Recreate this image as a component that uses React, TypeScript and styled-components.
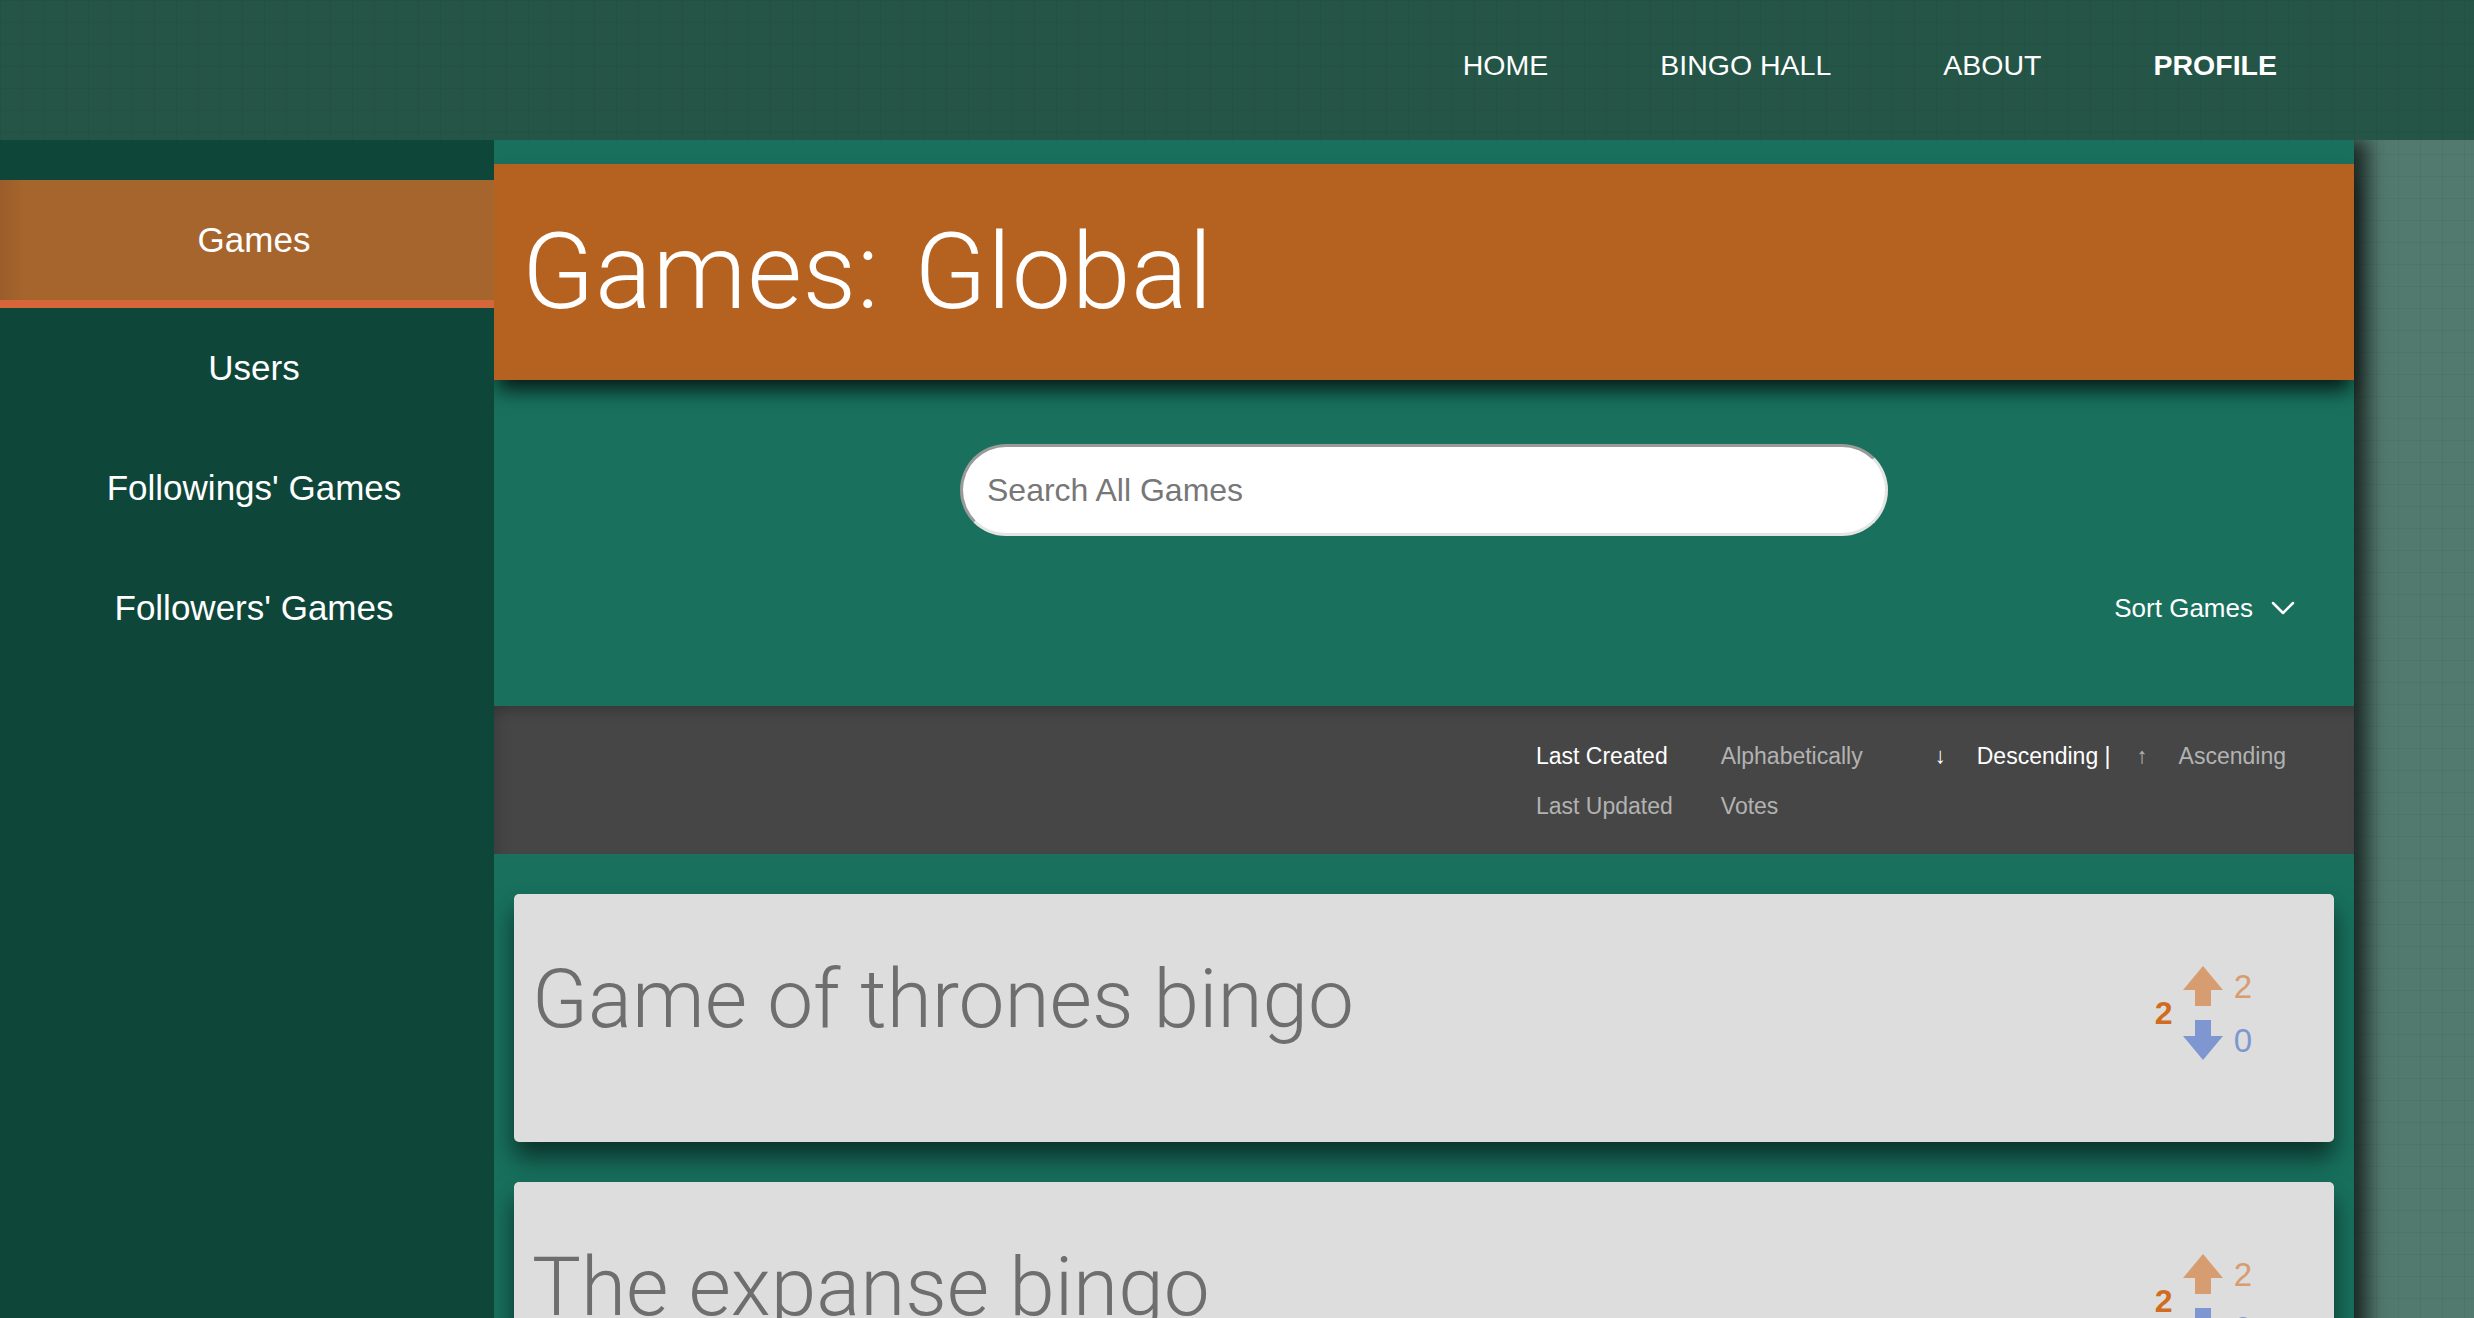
import React from "react";
import styled, { createGlobalStyle } from "styled-components";
import { ChevronDown } from "lucide-react";

const GlobalStyle = createGlobalStyle`
  * { box-sizing: border-box; }
  html, body { margin: 0; padding: 0; overflow: hidden; }
  body {
    font-family: "Liberation Sans", Arial, Helvetica, sans-serif;
    background-color: #537a6f;
    background-image:
      linear-gradient(rgba(0, 0, 0, 0.045) 1px, transparent 1px),
      linear-gradient(90deg, rgba(0, 0, 0, 0.045) 1px, transparent 1px);
    background-size: 22px 22px;
  }
`;

const Header = styled.header`
  position: relative;
  z-index: 3;
  height: 140px;
  display: flex;
  justify-content: flex-end;
  align-items: center;
  padding: 0 197px 10px 0;
  background-color: #245546;
  background-image:
    linear-gradient(rgba(0, 0, 0, 0.03) 1px, transparent 1px),
    linear-gradient(90deg, rgba(0, 0, 0, 0.03) 1px, transparent 1px);
  background-size: 22px 22px;
`;

const Nav = styled.nav`
  display: flex;
  gap: 112px;
`;

const NavLink = styled.a<{ $active?: boolean }>`
  color: #fff;
  font-size: 28.5px;
  line-height: 1;
  font-weight: ${(p) => (p.$active ? 700 : 400)};
  text-decoration: none;
  text-transform: uppercase;
  cursor: pointer;
`;

const Body = styled.div`
  display: flex;
  align-items: stretch;
  min-height: calc(100vh - 140px);
`;

const Sidebar = styled.aside`
  position: relative;
  z-index: 2;
  width: 494px;
  flex-shrink: 0;
  padding-top: 40px;
  background: #0e4639;
  display: flex;
  flex-direction: column;
`;

const SideItem = styled.a<{ $active?: boolean }>`
  display: flex;
  align-items: center;
  justify-content: center;
  height: ${(p) => (p.$active ? 128 : 120)}px;
  padding-left: 14px;
  color: #fff;
  font-size: 35px;
  text-decoration: none;
  cursor: pointer;
  background: ${(p) =>
    p.$active ? "linear-gradient(90deg, #9b5d2b 0px, #a6652c 26px)" : "transparent"};
  border-bottom: ${(p) => (p.$active ? "8px solid #d4663a" : "none")};
`;

const Main = styled.main`
  position: relative;
  z-index: 1;
  width: 1860px;
  flex-shrink: 0;
  background: #18705d;
  box-shadow: 14px 0 18px rgba(0, 0, 0, 0.65);
  display: flex;
  flex-direction: column;
`;

const Banner = styled.div`
  position: relative;
  z-index: 1;
  margin-top: 24px;
  height: 216px;
  display: flex;
  align-items: center;
  padding-left: 28px;
  background: #b5611f;
  box-shadow: 0 14px 18px -4px rgba(0, 0, 0, 0.75);
`;

const BannerTitle = styled.h1`
  margin: 0;
  font-family: Roboto, "Liberation Sans", Arial, sans-serif;
  font-weight: 300;
  font-size: 106px;
  line-height: 1.1;
  color: #fff;
  letter-spacing: 0.6px;
  word-spacing: 8px;
`;

const SearchRow = styled.div`
  display: flex;
  justify-content: center;
  padding-top: 64px;
`;

const SearchInput = styled.input`
  width: 928px;
  height: 92px;
  border-radius: 46px;
  border: 3px solid;
  border-color: #9a9a9a #e4e4e4 #e4e4e4 #9a9a9a;
  background: #fff;
  padding: 0 24px;
  font-family: "Liberation Sans", Arial, sans-serif;
  font-size: 32px;
  color: #555;
  outline: none;
  &::placeholder {
    color: #777;
  }
`;

const SortToggleRow = styled.div`
  display: flex;
  justify-content: flex-end;
  align-items: center;
  height: 44px;
  margin-top: 50px;
  padding-right: 51px;
`;

const SortToggle = styled.button`
  display: flex;
  align-items: center;
  gap: 10px;
  padding: 0;
  border: none;
  background: none;
  color: #fff;
  font-family: "Liberation Sans", Arial, sans-serif;
  font-size: 26px;
  cursor: pointer;
`;

const SortBar = styled.div`
  margin-top: 76px;
  height: 148px;
  display: flex;
  justify-content: flex-end;
  align-items: flex-start;
  gap: 72px;
  padding: 35px 68px 0 0;
  background: #464646;
  box-shadow: inset 0 14px 14px -10px rgba(0, 0, 0, 0.22),
    inset 14px 0 14px -10px rgba(0, 0, 0, 0.12);
`;

const SortGrid = styled.div`
  display: grid;
  grid-template-columns: auto auto;
  column-gap: 48px;
  row-gap: 20px;
`;

const SortOption = styled.span<{ $active?: boolean }>`
  font-size: 23px;
  line-height: 30px;
  color: ${(p) => (p.$active ? "#ffffff" : "#b2b2b2")};
  cursor: pointer;
`;

const OrderGroup = styled.div`
  display: flex;
  align-items: center;
  height: 30px;
`;

const OrderArrow = styled.span<{ $active?: boolean }>`
  font-size: 22px;
  line-height: 30px;
  margin-right: 31px;
  color: ${(p) => (p.$active ? "#ffffff" : "#b2b2b2")};
`;

const OrderLabel = styled(SortOption)<{ $gap?: number }>`
  margin-right: ${(p) => p.$gap ?? 0}px;
`;

const CardList = styled.div`
  display: flex;
  flex-direction: column;
  gap: 40px;
  padding: 40px 20px;
`;

const Card = styled.article`
  display: flex;
  justify-content: space-between;
  align-items: flex-start;
  height: 248px;
  padding: 56px 82px 0 18px;
  border-radius: 5px;
  background: #dddddd;
  box-shadow: 0 16px 24px rgba(0, 0, 0, 0.55);
`;

const CardTitle = styled.h2`
  margin: 0;
  font-family: Roboto, "Liberation Sans", Arial, sans-serif;
  font-weight: 300;
  font-size: 82px;
  line-height: 1.2;
  color: #6e6e6e;
`;

const Votes = styled.div`
  margin-top: 16px;
  display: grid;
  grid-template-columns: auto 40px auto;
  grid-template-rows: 40px 40px;
  column-gap: 10px;
  row-gap: 14px;
`;

const Total = styled.span`
  grid-row: 1 / span 2;
  grid-column: 1;
  align-self: center;
  font-size: 32px;
  font-weight: 700;
  color: #d16b20;
  line-height: 1;
`;

const Count = styled.span<{ $color: string }>`
  align-self: center;
  font-size: 33px;
  line-height: 1;
  color: ${(p) => p.$color};
  padding-left: 1px;
`;

const UP = "#d79c6f";
const DOWN = "#7f97d0";

const ArrowUp = () => (
  <svg width="40" height="40" viewBox="0 0 40 40">
    <path d="M20 0 L40 24 L28 24 L28 40 L12 40 L12 24 L0 24 Z" fill={UP} />
  </svg>
);

const ArrowDown = () => (
  <svg width="40" height="40" viewBox="0 0 40 40">
    <path d="M12 0 L28 0 L28 16 L40 16 L20 40 L0 16 L12 16 Z" fill={DOWN} />
  </svg>
);

const games = [
  { title: "Game of thrones bingo", up: 2, down: 0 },
  { title: "The expanse bingo", up: 2, down: 0 },
  { title: "Star wars bingo", up: 1, down: 0 },
];

export default function App() {
  return (
    <>
      <GlobalStyle />
      <Header>
        <Nav>
          <NavLink>Home</NavLink>
          <NavLink>Bingo Hall</NavLink>
          <NavLink>About</NavLink>
          <NavLink $active>Profile</NavLink>
        </Nav>
      </Header>
      <Body>
        <Sidebar>
          <SideItem $active>Games</SideItem>
          <SideItem>Users</SideItem>
          <SideItem>Followings' Games</SideItem>
          <SideItem>Followers' Games</SideItem>
        </Sidebar>
        <Main>
          <Banner>
            <BannerTitle>Games: Global</BannerTitle>
          </Banner>
          <SearchRow>
            <SearchInput placeholder="Search All Games" />
          </SearchRow>
          <SortToggleRow>
            <SortToggle>
              Sort Games
              <ChevronDown size={40} strokeWidth={1.5} />
            </SortToggle>
          </SortToggleRow>
          <SortBar>
            <SortGrid>
              <SortOption $active>Last Created</SortOption>
              <SortOption>Alphabetically</SortOption>
              <SortOption>Last Updated</SortOption>
              <SortOption>Votes</SortOption>
            </SortGrid>
            <OrderGroup>
              <OrderArrow $active>↓</OrderArrow>
              <OrderLabel $active $gap={26}>Descending |</OrderLabel>
              <OrderArrow>↑</OrderArrow>
              <OrderLabel>Ascending</OrderLabel>
            </OrderGroup>
          </SortBar>
          <CardList>
            {games.map((g) => (
              <Card key={g.title}>
                <CardTitle>{g.title}</CardTitle>
                <Votes>
                  <Total>{g.up - g.down}</Total>
                  <ArrowUp />
                  <Count $color={UP}>{g.up}</Count>
                  <ArrowDown />
                  <Count $color={DOWN}>{g.down}</Count>
                </Votes>
              </Card>
            ))}
          </CardList>
        </Main>
      </Body>
    </>
  );
}
